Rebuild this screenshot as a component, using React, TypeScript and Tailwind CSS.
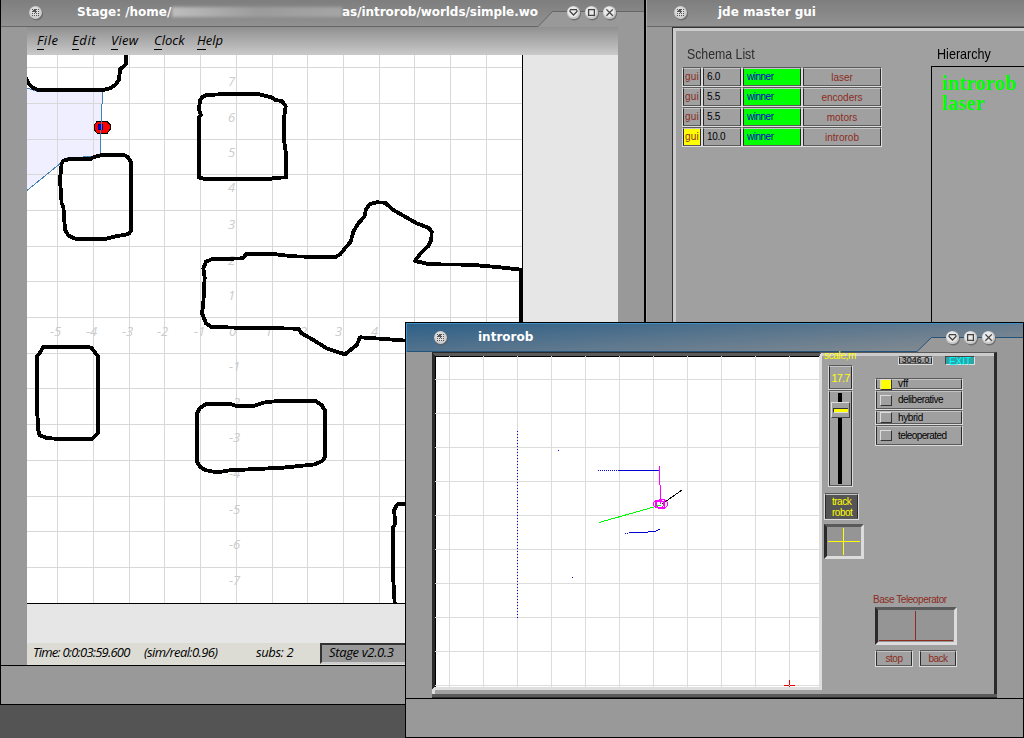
import type { ReactNode } from "react";

const GRID_X = [57, 93, 129, 164, 200, 236, 272, 307, 343, 379, 414, 450, 486];
const GRID_Y = [67, 103, 139, 174, 210, 246, 281, 317, 353, 388, 424, 460, 496, 531, 567];

const LABELS_Y: [string, number, number][] = [
  ["7", 228, 86], ["6", 228, 122], ["5", 228, 157], ["4", 228, 192], ["3", 228, 229],
  ["2", 228, 265], ["1", 228, 300], ["-1", 229, 371], ["-2", 229, 407], ["-3", 229, 442],
  ["-4", 229, 478], ["-5", 229, 514], ["-6", 229, 549], ["-7", 229, 585],
];
const LABELS_X: [string, number][] = [
  ["-5", 50], ["-4", 86], ["-3", 122], ["-2", 157], ["-1", 194], ["0", 229],
  ["1", 265], ["2", 300], ["3", 335], ["4", 371],
];

function MenuBall() {
  return (
    <svg width="16" height="16" viewBox="0 0 16 16" className="block shrink-0">
      <circle cx="8.6" cy="8.8" r="6.6" fill="#5c5c5c" opacity=".6" />
      <circle cx="7.5" cy="7.5" r="6.4" fill="#cecece" />
      <circle cx="6.8" cy="6.6" r="4.6" fill="#dedede" />
      <g fill="#555" shapeRendering="crispEdges">
        {[4, 6, 8, 10].map((y) => [4, 6, 8, 10].map((x) => <rect key={`${x}-${y}`} x={x} y={y} width="1" height="1" />))}
        <rect x="5" y="5" width="3" height="2" />
        <rect x="7" y="4" width="1" height="4" />
      </g>
    </svg>
  );
}

function Ball({ children }: { children: ReactNode }) {
  return (
    <svg width="18" height="16" viewBox="0 0 18 16" className="block">
      <circle cx="8.4" cy="8.8" r="6.6" fill="#555" opacity=".6" />
      <circle cx="7.5" cy="7.5" r="6.6" fill="#c9c9c9" />
      <circle cx="7" cy="6.8" r="5.4" fill="#eaeaea" />
      <g fill="none" stroke="#444" strokeWidth="1.3">{children}</g>
    </svg>
  );
}

function Controls() {
  return (
    <div className="flex">
      <Ball><path d="M4 4.7h7M4 5.2v1.300l3.500 3.500L11 6.500V5.200" /></Ball>
      <Ball><rect x="4.6" y="4.6" width="5.8" height="5.8" /></Ball>
      <Ball><path d="M4.4 4.4l6.4 6.4M10.8 4.4L4.4 10.8" /></Ball>
    </div>
  );
}

function Bevel({ className = "", inner = "", children }: { className?: string; inner?: string; children?: ReactNode }) {
  return (
    <div className={`shrink-0 border border-t-[#5a5a5a] border-l-[#dcdcdc] border-r-[#dcdcdc] border-b-[#dcdcdc] ${className}`}>
      <div className={`h-full w-full whitespace-nowrap border border-t-[#c4c4c4] border-l-[#2a2a2a] border-r-[#2a2a2a] border-b-[#5a5a5a] ${inner}`}>
        {children}
      </div>
    </div>
  );
}

function StageMap() {
  return (
    <svg width="591" height="588" viewBox="27 55 591 588" className="block shrink-0" shapeRendering="crispEdges">
      <rect x="27" y="55" width="591" height="588" fill="#e6e6e6" />
      <rect x="27" y="55" width="495" height="548" fill="#fff" />
      <path d="M27 88L36 91H102.500L100 156L67 158L27 190.500Z" fill="#f0efff" />
      <g fill="#d8d8d8">
        {GRID_X.map((x) => <rect key={x} x={x} y="55" width="1" height="548" />)}
        {GRID_Y.map((y) => <rect key={y} x="27" y={y} width="495" height="1" />)}
      </g>
      <g fill="#cbcbcb" className="font-['Open_Sans',sans-serif] text-[13px] italic">
        {LABELS_Y.map(([t, x, y]) => <text key={t} x={x} y={y}>{t}</text>)}
        {LABELS_X.map(([t, x]) => <text key={t} x={x} y="336">{t}</text>)}
      </g>
      <path d="M522.500 55V603.500H27" fill="none" stroke="#000" />
      <path d="M97 121.500H107L110.500 125V129L107 133.500H97.500L94.500 130V124.500Z" fill="#f00" stroke="#000" />
      <rect x="98.500" y="124.500" width="4" height="5" fill="#00f" stroke="#000080" />
      <path d="M27 88L36 91H102.500L100 156L67 158L27 190.500" fill="none" stroke="#4682b4" />
      <g fill="none" stroke="#000" strokeWidth="11.500" strokeLinejoin="round">
        <g transform="scale(.33333)">
          <path d="M78 232L84 248L97 262L112 269H312L330 265L345 255L357 240L360 208L377 194V160" />
          <path d="M185 490L190 482L205 478H270L280 472L310 464H370L382 470L392 485L394 690L388 700L375 705L350 708L320 716H225L205 706L195 690L190 620L185 610L180 540Z" />
          <path d="M600 300L608 290L620 285L700 281H770L815 292L825 300L845 303L857 318L852 355V420L859 470V532L820 534L810 538H620L597 533V352L603 345L597 328Z" />
        </g>
        <g transform="translate(0 240) scale(.33333)">
          <path d="M130 320H265L276 325L293 348V580L275 598H190L140 594L118 585L115 570L110 490V350L120 338Z" />
          <path d="M620 491H690L710 498H760L790 488L840 482H945L965 495L975 512L976 650L968 662L945 673L850 683L690 691L650 697L615 690L600 680L591 665V520L600 504Z" />
        </g>
        <g transform="translate(180 190) scale(.33333)">
          <path d="M1024 410V239L960 232L870 224L750 223L705 213L722 190L745 168L754 150L755 125L745 113L710 100L675 80L640 60L615 38L590 37L570 42L558 58L553 80L535 100L520 125L512 155L495 175L480 193L465 202L340 199L270 191H200L188 205L95 208L78 215L70 235L74 262L70 340L66 370L78 400L95 411L170 413L355 416L365 430L400 450L440 475L495 493L530 465L540 442L600 446L690 453" />
        </g>
        <g transform="translate(0 480) scale(.33333)">
          <path d="M1230 73H1192L1182 90L1186 130L1178 145L1180 300L1184 370" />
        </g>
      </g>
    </svg>
  );
}

function MenuItem({ k, rest, className }: { k: string; rest: string; className: string }) {
  return (
    <span className={className}>
      <span className="border-b border-black">{k}</span>{rest}
    </span>
  );
}

function StageWindow() {
  return (
    <div className="absolute left-0 top-0 flex h-[705px] w-[646px] flex-col border-b border-l border-r-2 border-black bg-[#999]">
      <div className="flex h-[27px] shrink-0 bg-linear-to-b from-[#7e7e7e] to-[#929292]">
        <div className="flex w-[537px] whitespace-nowrap border-b border-[#666] font-['DejaVu_Sans',sans-serif] text-[12px] font-bold leading-[25px] text-white">
          <div className="ml-[27px] mr-[34px] mt-[5px] h-4"><MenuBall /></div>
          <span className="ml-[-1px] w-[95px] shrink-0">Stage: /home/</span>
          <div className="mt-[7px] h-[10px] w-[170px] shrink-0 bg-linear-to-r from-[#d5d5d5] via-[#a5a5a5] to-[#b2b2b2] opacity-70 blur-[1.500px]" />
          <span className="shrink-0 tracking-[-.05px]">as/introrob/worlds/simple.wo</span>
        </div>
        <div className="relative w-[106px]">
          <svg width="106" height="27" className="absolute left-0 top-0">
            <path d="M0 27L14.500 11.500H106V27Z" fill="#999" />
            <path d="M0 26.500L14.500 11.500H106" fill="none" stroke="#666" />
          </svg>
          <div className="relative ml-[28px] pt-[5px]"><Controls /></div>
        </div>
      </div>
      <div className="ml-[26px] flex w-[591px] flex-col">
        <div className="flex h-[28px] bg-linear-to-b from-[#909090] to-[#cacaca] pl-[10px] pt-[5px] font-['Open_Sans',sans-serif] text-[13px] italic leading-[16px] text-black">
          <MenuItem k="F" rest="ile" className="w-[35px] tracking-[.6px]" />
          <MenuItem k="E" rest="dit" className="w-[39px] tracking-[.6px]" />
          <MenuItem k="V" rest="iew" className="w-[43px] tracking-[.3px]" />
          <MenuItem k="C" rest="lock" className="w-[43px]" />
          <MenuItem k="H" rest="elp" className="w-[40px]" />
        </div>
        <StageMap />
        <div className="flex h-[22px] whitespace-nowrap bg-[#dcdcd5] pl-[6px] font-['Open_Sans',sans-serif] text-[13px] italic leading-[19px] text-black">
          <span className="w-[111px] tracking-[-.8px]">Time: 0:0:03:59.600</span>
          <span className="w-[112px] tracking-[-.6px]">(sim/real:0.96)</span>
          <span className="w-[64px] tracking-[-.4px]">subs: 2</span>
          <div className="h-[21px] flex-1 border-b-2 border-l-2 border-t-2 border-b-[#ccc] border-l-[#333] border-t-[#333] bg-[#999] pl-[7px] leading-[15px] tracking-[-.35px]">Stage v2.0.3</div>
        </div>
      </div>
      <div className="flex-1 border-t border-black bg-[#999]" />
    </div>
  );
}

const SCHEMAS = [
  { value: "6.0", name: "laser", gui: "bg-[#a0a0a0]" },
  { value: "5.5", name: "encoders", gui: "bg-[#a0a0a0]" },
  { value: "5.5", name: "motors", gui: "bg-[#a0a0a0]" },
  { value: "10.0", name: "introrob", gui: "bg-[#ff0]" },
];

function MasterWindow() {
  return (
    <div className="absolute left-[646px] top-0 flex h-[330px] w-[378px] flex-col overflow-hidden border-l border-[#aaa] bg-[#999]">
      <div className="flex h-[27px] shrink-0 border-b border-[#666] bg-linear-to-b from-[#7e7e7e] to-[#929292] pl-[26px] font-['DejaVu_Sans',sans-serif] text-[12px] font-bold leading-[25px] text-white">
        <div className="mt-[5px] w-[45px]"><MenuBall /></div>
        <span>jde master gui</span>
      </div>
      <div className="ml-[25px] flex flex-1 border-l border-t border-[#333] bg-[#a0a0a0] font-['Liberation_Sans',sans-serif]">
        <div className="flex flex-1 border-l-3 border-t-3 border-[#ccc]">
          <div className="w-[255px] pl-[6px] pt-[12px]">
            <div className="ml-[5px] h-[24px] w-[100px] origin-left scale-x-[.82] whitespace-nowrap text-[15px] leading-[21px] text-[#2c2c2c]">Schema List</div>
            {SCHEMAS.map((s) => (
              <div key={s.name} className="flex h-[20px] text-[10px] leading-[16px]">
                <Bevel className="w-[20px]" inner={`text-center text-[#8b2c20] text-[10px] tracking-[.2px] ${s.gui}`}>gui</Bevel>
                <Bevel className="w-[40px]" inner="pl-[3px] text-black tracking-[-.3px]">{s.value}</Bevel>
                <Bevel className="w-[60px]" inner="bg-[#0f0] pl-[3px] text-[#0000d0] tracking-[-.5px]">winner</Bevel>
                <Bevel className="w-[80px]" inner="text-center text-[10px] leading-[18px] text-[#8b2c20]">{s.name}</Bevel>
              </div>
            ))}
          </div>
          <div className="flex flex-1 flex-col pt-[12px]">
            <div className="ml-[6px] h-[23px] origin-left scale-x-[.84] text-[15px] leading-[21px] text-black">Hierarchy</div>
            <div className="flex-1 border-l border-t border-black pl-[10px] pt-[6px] font-['Liberation_Serif',serif] text-[20px] font-bold leading-[20px] tracking-[.4px] text-[#0f0]">
              <div>introrob</div>
              <div>laser</div>
            </div>
          </div>
        </div>
      </div>
    </div>
  );
}

const WORLD_X = [449, 483, 517, 551, 585, 619, 653, 687, 721, 755, 789];
const WORLD_Y = [379, 413, 447, 481, 515, 549, 583, 617, 651, 685];

function RobotWorld() {
  return (
    <svg width="390" height="338" viewBox="432 352 390 338" className="block shrink-0" shapeRendering="crispEdges">
      <rect x="432" y="352" width="390" height="338" fill="#dedede" />
      <path d="M432 352H822L819 357H435V687L432 689Z" fill="#5a5a5a" />
      <path d="M432 352L435 356V687L432 689Z" fill="#2a2a2a" />
      <rect x="432" y="352" width="388" height="1" fill="#2a2a2a" />
      <rect x="435" y="356" width="384" height="331" fill="#000" />
      <rect x="436" y="357" width="383" height="330" fill="#fff" />
      <g fill="#dcdcdc">
        {WORLD_X.map((x) => <rect key={x} x={x} y="356" width="1" height="331" />)}
        {WORLD_Y.map((y) => <rect key={y} x="435" y={y} width="384" height="1" />)}
      </g>
      <path d="M517.500 431V620" stroke="#0000d0" strokeDasharray="1 2" />
      <g fill="#00d">
        <rect x="558" y="450" width="1" height="1" />
        <rect x="572" y="577" width="1" height="1" />
        <rect x="625" y="533" width="1" height="1" />
        <rect x="627" y="533" width="1" height="1" />
      </g>
      <path d="M598 470.500H619" stroke="#0000d0" strokeDasharray="1 1" />
      <path d="M619 470.500H660M629 532.500H648M648 531.500H656M656 530.500H658M658 529.500H660" stroke="#0000d0" />
      <path d="M661 505L599 522.500" stroke="#0f0" />
      <path d="M662 504L682 490" stroke="#000" />
      <g fill="none" stroke="#f0f">
        <path d="M659.500 466V485M660.500 485V504" />
        <ellipse cx="658.500" cy="504" rx="5" ry="4" />
        <ellipse cx="662" cy="504" rx="5.500" ry="4.500" />
        <rect x="655.500" y="501.500" width="9" height="6" />
      </g>
      <path d="M784 685.500H795M789.500 680V687" stroke="#e00" />
      <rect x="789" y="685" width="1" height="1" fill="#fff" />
    </svg>
  );
}

const MODES = [
  { label: "vff", on: true, size: "h-[12px]", text: "" },
  { label: "deliberative", on: false, size: "h-[20px]", text: "tracking-[-.5px]" },
  { label: "hybrid", on: false, size: "h-[15px]", text: "tracking-[-.4px]" },
  { label: "teleoperated", on: false, size: "h-[21px]", text: "tracking-[-.6px]" },
];

function ControlPanel() {
  return (
    <div className="flex h-[342px] w-[175px] border-r-3 border-t border-r-[#2a2a2a] border-t-[#5a5a5a] bg-[#a0a0a0] font-['Liberation_Sans',sans-serif]">
      <div className="flex w-[172px] border-t-3 border-[#ccc]">
        <div className="flex w-[51px] flex-col pl-[2px]">
          <div className="relative top-[-6px] h-[8px] whitespace-nowrap text-[10px] leading-[12px] tracking-[-.35px] text-[#ff0]">scale,m</div>
          <Bevel className="ml-[4px] mt-[1px] h-[25px] w-[25px]" inner="text-center text-[11px] leading-[23px] tracking-[-.8px] text-[#ff0]">17.7</Bevel>
          <Bevel className="ml-[4px] h-[97px] w-[25px]" inner="flex flex-col items-center pt-px pr-px">
            <div className="h-[9px] w-[4px] bg-black" />
            <div className="flex h-[16px] w-[19px] flex-col items-center border border-b-[#444] border-l-[#ddd] border-r-[#444] border-t-[#ddd] pt-[5px]">
              <div className="h-[5px] w-[15px] border-b border-l border-t border-b-[#ddd] border-l-[#333] border-t-[#333] bg-[#ff0]" />
            </div>
            <div className="h-[66px] w-[4px] bg-black" />
          </Bevel>
          <Bevel className="mt-[6px] h-[27px] w-[35px]" inner="bg-[#555] pl-[6px] pt-[1px] text-[10px] leading-[11px] tracking-[-.5px] text-[#ff0]">
            <div>track</div>
            <div>robot</div>
          </Bevel>
          <div className="mt-[4px] h-[35px] w-[40px] border-3 border-b-[#dcdcdc] border-l-[#2a2a2a] border-r-[#dcdcdc] border-t-[#5a5a5a] bg-[#959595]">
            <svg width="34" height="29" className="block" shapeRendering="crispEdges">
              <path d="M1 14.500H33M16.500 1V28" stroke="#ff0" />
            </svg>
          </div>
        </div>
        <div className="flex flex-col">
          <div className="flex h-[22px] pl-[25px]">
            <Bevel className="h-[9px] w-[35px]" inner="bg-[#a0a0a0] text-center text-[9px] leading-[5px] text-black">3046.0</Bevel>
            <div className="ml-[12px] h-[9px] w-[30px] border border-b-[#ddd] border-l-[#444] border-r-[#ddd] border-t-[#444] bg-[#2aa5a8] text-center text-[10px] leading-[9px] text-[#0ff]">EXIT</div>
          </div>
          <div className="ml-[2px] flex flex-col">
            {MODES.map((m) => (
              <Bevel key={m.label} className={`w-[88px] ${m.size}`} inner="flex items-center pl-[3px]">
                <div className={`h-[11px] w-[12px] shrink-0 border border-b-[#333] border-l-[#ddd] border-r-[#333] border-t-[#ddd] ${m.on ? "bg-[#ff0]" : "bg-[#a0a0a0]"}`} />
                <span className={`ml-[6px] text-[10px] leading-[12px] text-black ${m.text}`}>{m.label}</span>
              </Bevel>
            ))}
          </div>
          <div className="mt-[148px] h-[13px] whitespace-nowrap text-[10px] leading-[12px] tracking-[-.43px] text-[#8b2c20]">Base Teleoperator</div>
          <div className="ml-[2px] h-[38px] w-[82px] border-3 border-b-[#dcdcdc] border-l-[#2a2a2a] border-r-[#dcdcdc] border-t-[#5a5a5a] bg-[#959595]">
            <svg width="76" height="32" className="block" shapeRendering="crispEdges">
              <path d="M1 30.500H75M37.500 1V30" stroke="#8b2c20" />
            </svg>
          </div>
          <div className="ml-[2px] mt-[5px] flex gap-[6px] text-[10px] leading-[14px] tracking-[-.5px] text-[#8b2c20]">
            <Bevel className="h-[17px] w-[38px]" inner="text-center">stop</Bevel>
            <Bevel className="h-[17px] w-[38px]" inner="text-center">back</Bevel>
          </div>
        </div>
      </div>
    </div>
  );
}

function IntrorobWindow() {
  return (
    <div className="absolute left-[405px] top-[322px] flex h-[416px] w-[619px] flex-col border border-black bg-[#999]">
      <div className="flex h-[29px] shrink-0 border-l border-t border-[#4090c8] bg-linear-176 from-[#2c6088] to-[#8b8f92]">
        <div className="flex w-[510px] border-b border-[#23537a] pl-[26px] font-['DejaVu_Sans',sans-serif] text-[12px] font-bold leading-[27px] text-white">
          <div className="mt-[6px] w-[45px]"><MenuBall /></div>
          <span>introrob</span>
        </div>
        <div className="relative w-[106px]">
          <svg width="106" height="28" className="absolute left-0 top-0">
            <path d="M0 28L14.500 13.500H106V28Z" fill="#999" />
            <path d="M0 27.500L14.500 13.500H106" fill="none" stroke="#23537a" />
          </svg>
          <div className="relative ml-[28px] pt-[6px]"><Controls /></div>
        </div>
      </div>
      <div className="ml-[26px] flex h-[342px] w-[565px] shrink-0">
        <div className="flex w-[390px] flex-col bg-[#a0a0a0]">
          <RobotWorld />
          <div className="h-[4px] border-l-3 border-[#dcdcdc]" />
        </div>
        <ControlPanel />
      </div>
      <div className="ml-[26px] h-[4px] w-[565px] shrink-0 border-b border-[#2a2a2a] bg-[#5a5a5a]" />
      <div className="flex-1 border-t border-black" />
    </div>
  );
}

export default function App() {
  return (
    <div className="relative h-[738px] w-[1024px] overflow-hidden bg-[#545454]">
      <StageWindow />
      <MasterWindow />
      <IntrorobWindow />
    </div>
  );
}
